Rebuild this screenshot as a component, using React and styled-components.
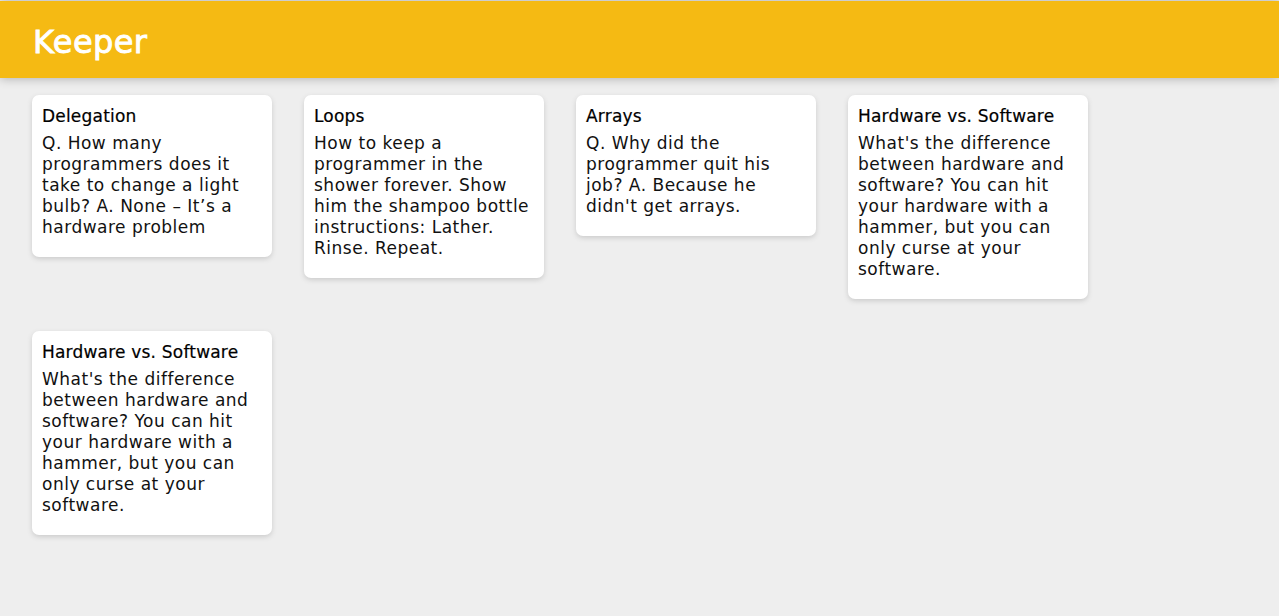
import React from 'react';
import styled, { createGlobalStyle } from 'styled-components';

const GlobalStyle = createGlobalStyle`
  * {
    margin: 0;
    padding: 0;
    box-sizing: border-box;
  }
  html, body {
    background: #eee;
  }
  body {
    font-family: "DejaVu Sans", "Open Sans", sans-serif;
    padding: 0 16px;
    min-height: 616px;
  }
`;

const Header = styled.header`
  background-color: #f5ba13;
  margin: 1px -16px 0;
  padding: 19px 33px 0;
  height: 77px;
  box-shadow: 0 0 10px 0 rgba(0, 0, 0, 0.3);
`;

const Logo = styled.h1`
  color: #fff;
  font-family: "DejaVu Sans", sans-serif;
  font-size: 32px;
  font-weight: 400;
  line-height: 44px;
  letter-spacing: 0.4px;
  -webkit-text-stroke: 0.9px #fff;
`;

const Board = styled.main`
  display: flex;
  flex-wrap: wrap;
  align-items: flex-start;
  padding-top: 1px;
`;

const Note = styled.div`
  background: #fff;
  border-radius: 7px;
  box-shadow: 0 2px 5px #ccc;
  padding: 10px;
  width: 240px;
  margin: 16px;
`;

const Title = styled.h1`
  font-size: 17px;
  font-weight: 400;
  line-height: 22px;
  margin-bottom: 6px;
  color: #000;
  letter-spacing: 0.2px;
  -webkit-text-stroke: 0.2px #000;
`;

const Body = styled.p`
  font-size: 17px;
  line-height: 21px;
  margin-bottom: 9px;
  color: #111;
  letter-spacing: 0.5px;
  white-space: pre-wrap;
`;

const notes = [
  {
    title: 'Delegation',
    content: 'Q. How many programmers does it take to change a light bulb? A. None \u2013 It\u2019s a hardware problem',
  },
  {
    title: 'Loops',
    content: 'How to keep a programmer in the shower forever. Show him the shampoo bottle instructions: Lather. Rinse. Repeat.',
  },
  {
    title: 'Arrays',
    content: "Q. Why did the programmer quit his job? A. Because he didn't get arrays.",
  },
  {
    title: 'Hardware vs. Software',
    content: "What's the difference between hardware and software? You can hit your hardware with a hammer, but you can only curse at your software.",
  },
  {
    title: 'Hardware vs. Software',
    content: "What's the difference between hardware and software? You can hit your hardware with a hammer, but you can only curse at your software.",
  },
];

export default function App() {
  return (
    <>
      <GlobalStyle />
      <Header>
        <Logo>Keeper</Logo>
      </Header>
      <Board>
        {notes.map((n, i) => (
          <Note key={i}>
            <Title>{n.title}</Title>
            <Body>{n.content}</Body>
          </Note>
        ))}
      </Board>
    </>
  );
}
